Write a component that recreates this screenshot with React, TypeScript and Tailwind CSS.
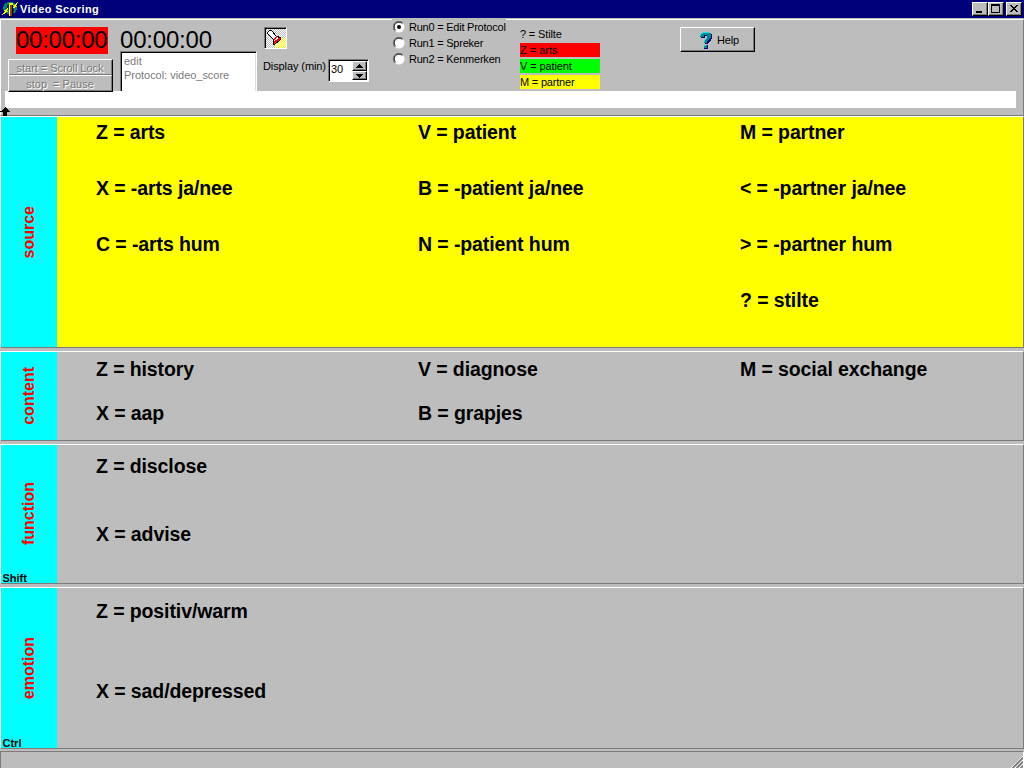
import React from "react";

const raised =
  "border border-t-white border-l-white border-b-black border-r-black shadow-[inset_-1px_-1px_0_#7b7b7b]";

function AppIcon() {
  return (
    <svg width="16" height="16" viewBox="0 0 16 16" shapeRendering="crispEdges" className="shrink-0">
      <path d="M5 1h6v1h2v1h1v2h1v4h-1v2h-1v1h-2v1H5v-1H3v-1H2V9H1V5h1V3h1V2h2z" fill="#007b7b" />
      <path d="M5 4h2v5H5zM10 8h2v3h-2z" fill="#003939" />
      <path d="M7 2h4v2H7z" fill="#ffff00" />
      <path d="M7 4h1v11H7z" fill="#ffff7b" />
      <path d="M8 4h2v11H8z" fill="#a53900" />
      <path d="M10 4h1v11h-1zM6 15h5v1H6z" fill="#000" />
      <path d="M0 13h1v-1h1v-1h1v-1H2V9h2V8h1V7h1v2H5v1h1v1H4v1H3v1H1v1H0zM11 7V6h1V5h-1V4h2V3h1V2h1V1h1v1h-1v2h-1v1h1v1h-2v1z" fill="#ffff00" />
    </svg>
  );
}

function TitleButton({ children, className = "" }: { children: React.ReactNode; className?: string }) {
  return (
    <button className={`h-[14px] w-4 bg-[#bdbdbd] ${raised} ${className}`}>
      <svg width="14" height="12" viewBox="0 0 14 12" shapeRendering="crispEdges" className="block">
        {children}
      </svg>
    </button>
  );
}

function Torch() {
  return (
    <svg width="20" height="20" viewBox="0 0 20 20" shapeRendering="crispEdges" className="mt-px ml-px block">
      <defs>
        <pattern id="dither" width="2" height="2" patternUnits="userSpaceOnUse">
          <rect width="2" height="2" fill="#fff" />
          <path d="M0 0h1v1H0zM1 1h1v1H1z" fill="#bdbdbd" />
        </pattern>
        <pattern id="beam" width="2" height="2" patternUnits="userSpaceOnUse">
          <rect width="2" height="2" fill="#fff" />
          <path d="M0 0h1v1H0zM1 1h1v1H1z" fill="#ffff00" />
        </pattern>
      </defs>
      <rect width="20" height="20" fill="url(#dither)" />
      <path d="M9 9h11v11H9z" fill="url(#beam)" />
      <path d="M1.5 3.5l2-2h2l5 6 4 1v2l-6 5h-1v-5l-6-6z" fill="#fff" stroke="#000" />
      <path d="M8 9h1V8h1V7h1v2h-1v1H9v1H8z" fill="#f00" />
      <path d="M8 14v-2h1v-1h2v-1h1V9h3v1h-1v1h-1v1h-2v1h-1v1H9v1H8z" fill="#f00" />
    </svg>
  );
}

function Radio({ label, checked = false }: { label: string; checked?: boolean }) {
  return (
    <label className="flex h-4 items-center gap-[4px] whitespace-nowrap">
      <svg width="12" height="12" viewBox="0 0 12 12" className="shrink-0">
        <circle cx="6" cy="6" r="5.5" fill="#fff" />
        <path d="M1.8 10.2A5.5 5.5 0 0 1 10.2 1.8" fill="none" stroke="#7b7b7b" />
        <path d="M2.5 9.3A4.5 4.5 0 0 1 9.3 2.5" fill="none" stroke="#000" />
        {checked && <circle cx="6" cy="6" r="2" fill="#000" />}
      </svg>
      <span className="tracking-[-0.23px]">{label}</span>
    </label>
  );
}

interface PanelProps {
  name: string;
  items: string[];
  hotkey?: string;
  height: string;
  rows: string;
  fill?: string;
}

function Panel({ name, items, hotkey, height, rows, fill = "bg-[#bdbdbd]" }: PanelProps) {
  return (
    <section className={`flex shrink-0 border border-t-white border-l-white border-b-[#7b7b7b] border-r-[#7b7b7b] ${height} ${fill}`}>
      <div className="relative flex w-[56px] shrink-0 items-center justify-center bg-[#00ffff]">
        <span className="rotate-180 text-[16px] leading-[18px] font-bold text-[#ff0000] [writing-mode:vertical-rl]">
          {name}
        </span>
        {hotkey && (
          <span className="absolute -bottom-px left-[1.5px] text-[11px] leading-[11px] font-bold">{hotkey}</span>
        )}
      </div>
      <div className={`ml-[39px] grid grid-cols-[322px_322px_1fr] content-start text-[19.5px] leading-[24px] font-bold tracking-[-0.1px] whitespace-nowrap ${rows}`}>
        {items.map((t, i) => (
          <div key={i}>{t}</div>
        ))}
      </div>
    </section>
  );
}

export default function App() {
  return (
    <div className="flex h-[768px] w-[1024px] flex-col overflow-hidden bg-[#bdbdbd] font-['Liberation_Sans',Arial,sans-serif] text-[11px] leading-[13px] text-black">
      <header className="flex h-[18px] shrink-0 items-center bg-[#00007b] pr-[2px] pl-[2px] text-white">
        <AppIcon />
        <span className="ml-[2px] flex-1 text-[11px] font-bold tracking-[0.42px]">Video Scoring</span>
        <TitleButton>
          <path d="M3 8h6v2H3z" fill="#000" />
        </TitleButton>
        <TitleButton>
          <path d="M2 1h9v9H2zM3 3v6h7V3z" fillRule="evenodd" fill="#000" />
        </TitleButton>
        <TitleButton className="ml-[2px]">
          <path d="M3 2h2v1h1v1h2V3h1V2h2v1h-1v1H9v1H8v1h1v1h1v1h1v1H9V8H8V7H6v1H5v1H3V8h1V7h1V6h1V5H5V4H4V3H3z" fill="#000" />
        </TitleButton>
      </header>

      <section className="mt-px h-[97px] shrink-0 border border-t-white border-l-white border-b-[#7b7b7b] border-r-[#7b7b7b]">
        <div className="flex h-[71px]">
          <div className="relative z-10 ml-[7px] w-[105px] pt-[7px]">
            <div className="ml-2 h-[27px] w-[92px] bg-[#ff0000] text-[24px] leading-[26px] tracking-[-0.25px]">00:00:00</div>
            <div className="mt-[5px] h-[33px] border border-black border-t-white border-l-white bg-[#bdbdbd] text-center text-[#7b7b7b] [text-shadow:1px_1px_0_#fff]">
              <div className="h-[15px] border-r border-b border-[#7b7b7b] leading-[17px] tracking-[-0.05px]">start = Scroll Lock</div>
              <div className="h-4 border-t border-r border-b border-[#7b7b7b] border-t-white leading-[16px] whitespace-pre">stop  = Pause</div>
            </div>
          </div>
          <div className="ml-[7px] w-[137px] pt-[7px]">
            <div className="h-6 text-[24px] leading-[26px] tracking-[-0.2px]">00:00:00</div>
            <div className="h-10 border border-b-0 border-[#7b7b7b] border-r-white bg-white pl-[3px] text-[#7b7b7b] shadow-[inset_1px_1px_0_#000,inset_-1px_0_0_#dedede]">
              <div className="pt-[2px] leading-[14px]">edit</div>
              <div className="leading-[14px] tracking-[-0.03px]">Protocol: video_score</div>
            </div>
          </div>
          <div className="ml-[6px] w-[106px] pt-[7px]">
            <div className="ml-[1px] h-[22px] w-[23px] overflow-hidden border border-white border-t-[#7b7b7b] border-l-[#7b7b7b] shadow-[inset_1px_1px_0_#000]">
              <Torch />
            </div>
            <div className="mt-[10px] flex">
              <span className="w-[65px] pt-[1px] tracking-[-0.1px] whitespace-nowrap">Display (min)</span>
              <div className="flex h-[23px] w-[41px] border border-white border-t-[#7b7b7b] border-l-[#7b7b7b] bg-white p-px shadow-[inset_1px_1px_0_#000]">
                <span className="w-[22px] pt-[2px] pl-[1px]">30</span>
                <div className="flex flex-col">
                  {["M6 2h1v1h1v1h1v1h1v1H3V5h1V4h1V3h1z", "M3 2h7v1H9v1H8v1H7v1H6V5H5V4H4V3H3z"].map((d) => (
                    <div key={d} className={`h-[9.5px] w-[15px] bg-[#bdbdbd] ${raised}`}>
                      <svg width="13" height="8" shapeRendering="crispEdges" className="block">
                        <path d={d} />
                      </svg>
                    </div>
                  ))}
                </div>
              </div>
            </div>
          </div>
          <div className="-mt-px mr-[13px] ml-[23px] w-[114px] self-start bg-[#bdbdbd] pl-px">
            <Radio label="Run0 = Edit Protocol" checked />
            <Radio label="Run1 = Spreker" />
            <Radio label="Run2 = Kenmerken" />
          </div>
          <div className="flex w-[81px] flex-col gap-[2px] pt-[7px] pl-px leading-[14px]">
            <div className="h-[14px] tracking-[-0.15px]">? = Stilte</div>
            <div className="h-[14px] bg-[#ff0000]">Z = arts</div>
            <div className="h-[14px] bg-[#00ff00] tracking-[-0.1px]">V = patient</div>
            <div className="h-[14px] bg-[#ffff00] tracking-[-0.2px]">M = partner</div>
          </div>
          <div className={`mt-[7px] ml-[80px] flex h-[25px] w-[75px] items-center bg-[#bdbdbd] pl-[19px] ${raised}`}>
            <svg width="13" height="17" viewBox="0 0 13 17" shapeRendering="crispEdges" className="mt-[1px]">
              <path d="M3 1h7v1h2v5h-1v2h-1v1H9v1H8v1H5V8h2V6h1V4H5v2H1V2h2zM5 13h3v4H4v-3h1z" fill="#00007b" />
              <path d="M3 0h6v1h2v5h-1v1H9v1H8v1H7v2H4V8h1V7h1V6h1V3H4v2H0V2h1V1h2zM4 13h3v3H4z" fill="#008484" />
              <path d="M3 0h6v1H3zM1 1h2v1H1zM0 2h1v2H0zM6 6h1v1H6zM5 7h1v1H5zM4 8h1v2H4zM4 13h2v1H4z" fill="#00e7e7" />
            </svg>
            <span className="mt-[2px] ml-[4px] tracking-[-0.2px]">Help</span>
          </div>
        </div>
        <div className="relative mr-[7px] ml-[4px] h-[17px] bg-white">
          <svg width="10" height="9" viewBox="0 0 10 9" shapeRendering="crispEdges" className="absolute top-4 -left-[5px]">
            <path d="M5 0h1v1h1v1h1v1h1v1h1v1H7v4H3V5H0V4h2V3h1V2h1V1h1z" />
          </svg>
        </div>
      </section>

      <Panel
        name="source"
        height="h-[232px]"
        fill="bg-[#ffff00]"
        rows="auto-rows-[56px] pt-[3px]"
        items={["Z = arts", "V = patient", "M = partner", "X = -arts ja/nee", "B = -patient ja/nee", "< = -partner ja/nee", "C = -arts hum", "N = -patient hum", "> = -partner hum", "", "", "? = stilte"]}
      />
      <div className="h-[3px] shrink-0" />
      <Panel
        name="content"
        height="h-[90px]"
        rows="auto-rows-[44px] pt-[5px]"
        items={["Z = history", "V = diagnose", "M = social exchange", "X = aap", "B = grapjes"]}
      />
      <div className="h-[3px] shrink-0" />
      <Panel name="function" hotkey="Shift" height="h-[140px]" rows="auto-rows-[68px] pt-[9px]" items={["Z = disclose", "", "", "X = advise"]} />
      <div className="h-[3px] shrink-0" />
      <Panel name="emotion" hotkey="Ctrl" height="h-[162px]" rows="auto-rows-[80px] pt-[11px]" items={["Z = positiv/warm", "", "", "X = sad/depressed"]} />
      <footer className="mt-[2px] flex flex-1 items-end justify-end border border-b-0 border-[#7b7b7b] border-r-white">
        <svg width="12" height="12" viewBox="0 0 12 12">
          <path d="M0 12L12 0M4 12l8-8M8 12l4-4" stroke="#fff" />
          <path d="M1.5 12L12 1.5M5.5 12L12 5.5M9.5 12L12 9.5" stroke="#7b7b7b" strokeWidth="1.6" />
        </svg>
      </footer>
    </div>
  );
}
